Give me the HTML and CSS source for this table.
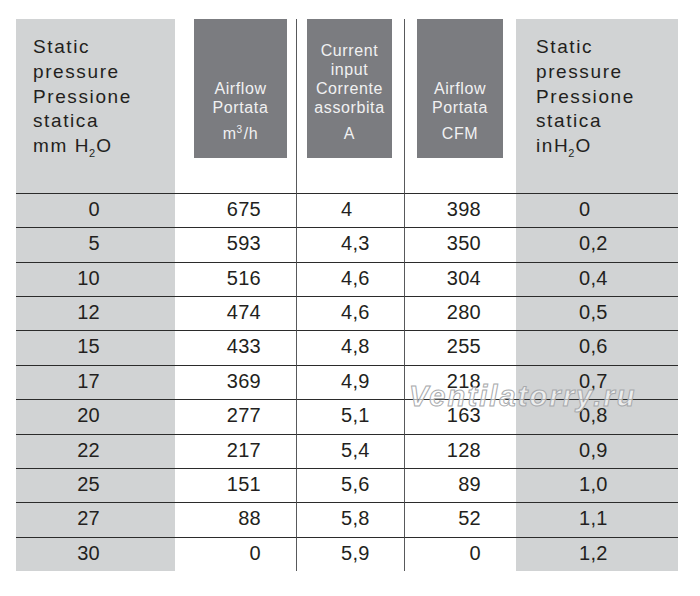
FILE: index.html
```html
<!DOCTYPE html>
<html>
<head>
<meta charset="utf-8">
<link rel="stylesheet" href="styles.css">
</head>
<body>
<div class="sheet">
  <div class="table">
    <div class="cell head grey c1"><div class="htext">Static<br>pressure<br>Pressione<br>statica<br>mm H<sub>2</sub>O</div></div>
    <div class="cell head c2"><div class="box"><span>Airflow</span><span>Portata</span><span class="unit">m<sup>3</sup>/h</span></div></div>
    <div class="cell head c3 vline"><div class="box"><span>Current</span><span>input</span><span>Corrente</span><span>assorbita</span><span class="unit">A</span></div></div>
    <div class="cell head c4 vline"><div class="box"><span>Airflow</span><span>Portata</span><span class="unit">CFM</span></div></div>
    <div class="cell head grey c5"><div class="htext">Static<br>pressure<br>Pressione<br>statica<br>inH<sub>2</sub>O</div></div>

    <div class="cell d grey c1">0</div><div class="cell d c2">675</div><div class="cell d c3 vline">4</div><div class="cell d c4 vline">398</div><div class="cell d grey c5">0</div>
    <div class="cell d grey c1">5</div><div class="cell d c2">593</div><div class="cell d c3 vline">4,3</div><div class="cell d c4 vline">350</div><div class="cell d grey c5">0,2</div>
    <div class="cell d grey c1">10</div><div class="cell d c2">516</div><div class="cell d c3 vline">4,6</div><div class="cell d c4 vline">304</div><div class="cell d grey c5">0,4</div>
    <div class="cell d grey c1">12</div><div class="cell d c2">474</div><div class="cell d c3 vline">4,6</div><div class="cell d c4 vline">280</div><div class="cell d grey c5">0,5</div>
    <div class="cell d grey c1">15</div><div class="cell d c2">433</div><div class="cell d c3 vline">4,8</div><div class="cell d c4 vline">255</div><div class="cell d grey c5">0,6</div>
    <div class="cell d grey c1">17</div><div class="cell d c2">369</div><div class="cell d c3 vline">4,9</div><div class="cell d c4 vline">218</div><div class="cell d grey c5">0,7</div>
    <div class="cell d grey c1">20</div><div class="cell d c2">277</div><div class="cell d c3 vline">5,1</div><div class="cell d c4 vline">163</div><div class="cell d grey c5">0,8</div>
    <div class="cell d grey c1">22</div><div class="cell d c2">217</div><div class="cell d c3 vline">5,4</div><div class="cell d c4 vline">128</div><div class="cell d grey c5">0,9</div>
    <div class="cell d grey c1">25</div><div class="cell d c2">151</div><div class="cell d c3 vline">5,6</div><div class="cell d c4 vline">89</div><div class="cell d grey c5">1,0</div>
    <div class="cell d grey c1">27</div><div class="cell d c2">88</div><div class="cell d c3 vline">5,8</div><div class="cell d c4 vline">52</div><div class="cell d grey c5">1,1</div>
    <div class="cell d grey c1">30</div><div class="cell d c2">0</div><div class="cell d c3 vline">5,9</div><div class="cell d c4 vline">0</div><div class="cell d grey c5">1,2</div>
  </div>
  <div class="watermark">Ventilatorry.ru</div>
</div>
</body>
</html>
```
FILE: styles.css
```css
html, body {
  margin: 0;
  padding: 0;
  background: #ffffff;
}
body {
  font-family: "Liberation Sans", Arial, sans-serif;
  color: #231f20;
}
.sheet {
  position: relative;
  width: 700px;
  height: 596px;
  padding: 19px 0 0 16px;
  box-sizing: border-box;
}
.table {
  display: grid;
  grid-template-columns: 159px 121px 108px 112px 162px;
  grid-template-rows: 174px repeat(11, 34.36px);
}
.cell {
  box-sizing: border-box;
  min-width: 0;
}
.grey {
  background: #d1d3d4;
}
.vline {
  border-left: 1.5px solid #58595b;
}
.head.c1 .htext {
  padding-left: 17px;
}
.head.c5 .htext {
  padding-left: 20px;
}
.htext {
  padding-top: 16px;
  font-size: 19px;
  line-height: 24.75px;
  letter-spacing: 1.6px;
}
.htext sub {
  font-size: 11px;
  line-height: 0;
  vertical-align: -5px;
  letter-spacing: 0;
  margin-left: -1px;
  margin-right: 1px;
}
.box {
  height: 139px;
  background: #7b7c80;
  color: #f1f1f2;
  display: flex;
  flex-direction: column;
  justify-content: flex-end;
  align-items: center;
  padding-bottom: 15px;
  box-sizing: border-box;
  font-size: 16px;
  line-height: 19px;
  letter-spacing: 0.6px;
}
.box .unit {
  margin-top: 7px;
}
.box sup {
  font-size: 10px;
  line-height: 0;
  vertical-align: 6px;
  margin-right: 1px;
}
.head.c2 .box {
  margin-left: 19px;
  margin-right: 9px;
}
.head.c3 .box {
  margin-left: 10px;
  margin-right: 12px;
}
.head.c4 .box {
  margin-left: 12px;
  margin-right: 13px;
}
.d {
  border-top: 1.5px solid #2b2b2b;
  font-size: 20px;
  line-height: 31px;
  letter-spacing: 0.3px;
}
.d.c1 {
  text-align: right;
  padding-right: 75px;
}
.d.c2 {
  text-align: right;
  padding-right: 35px;
}
.d.c3 {
  text-align: left;
  padding-left: 44px;
}
.d.c4 {
  text-align: right;
  padding-right: 35px;
}
.d.c5 {
  text-align: left;
  padding-left: 63px;
}
.watermark {
  position: absolute;
  left: 409px;
  top: 380px;
  font-size: 29px;
  font-weight: bold;
  font-style: italic;
  letter-spacing: 2.1px;
  color: rgba(255, 255, 255, 0.6);
  -webkit-text-stroke: 1px #a7a9ac;
  white-space: nowrap;
}
```
